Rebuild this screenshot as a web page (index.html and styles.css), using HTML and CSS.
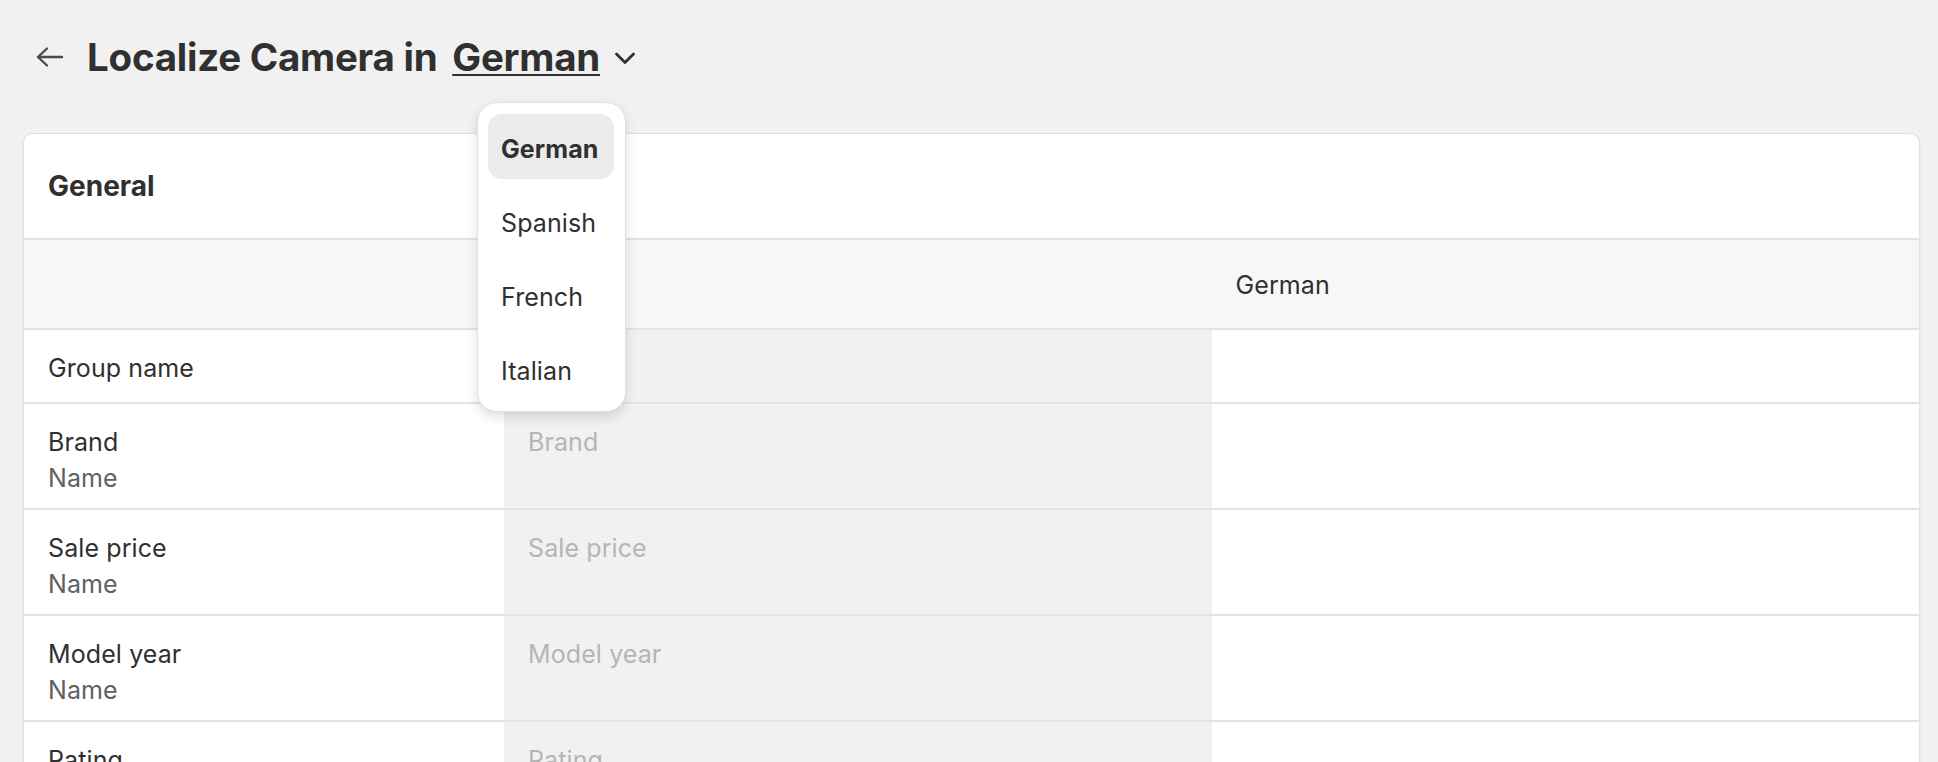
FILE: index.html
```html
<!DOCTYPE html>
<html lang="en">
<head>
    <meta charset="UTF-8">
    <meta name="viewport" content="width=device-width, initial-scale=1.0">
    <title>Localize Camera</title>
    <link rel="stylesheet" href="styles.css">
</head>
<body>

    <div class="page">
        <header class="page-header">
            <button class="back" aria-label="Back">
                <svg width="28" height="20" viewBox="0 0 28 20"><path d="M2 10H26M11 1.5L2 10L11 18.5" fill="none" stroke="#4a4a4a" stroke-width="2.4" stroke-linecap="round" stroke-linejoin="round"/></svg>
            </button>
            <h1 class="title">Localize Camera in <span class="lang">German</span></h1>
            <svg class="chevron" width="22" height="14" viewBox="0 0 22 14"><path d="M2.5 3L11 11.5L19.5 3" fill="none" stroke="#303030" stroke-width="2.8" stroke-linecap="round" stroke-linejoin="round"/></svg>
        </header>

        <!-- language menu, open -->
        <ul class="menu">
            <li class="menu-item selected">German</li>
            <li class="menu-item">Spanish</li>
            <li class="menu-item">French</li>
            <li class="menu-item">Italian</li>
        </ul>

        <div class="card">
            <div class="card-title">General</div>

            <div class="row head">
                <div class="cell"></div>
                <div class="cell"></div>
                <div class="cell">German</div>
            </div>

            <div class="row">
                <div class="cell label">Group name</div>
                <div class="cell source"></div>
                <div class="cell"></div>
            </div>
            <div class="row">
                <div class="cell label">Brand<span class="sub">Name</span></div>
                <div class="cell source">Brand</div>
                <div class="cell"></div>
            </div>
            <div class="row">
                <div class="cell label">Sale price<span class="sub">Name</span></div>
                <div class="cell source">Sale price</div>
                <div class="cell"></div>
            </div>
            <div class="row">
                <div class="cell label">Model year<span class="sub">Name</span></div>
                <div class="cell source">Model year</div>
                <div class="cell"></div>
            </div>
            <div class="row">
                <div class="cell label">Rating<span class="sub">Name</span></div>
                <div class="cell source">Rating</div>
                <div class="cell"></div>
            </div>
        </div>
    </div>

</body>
</html>
```

FILE: styles.css
```css
body { margin: 0; background-color: #f1f1f1; font-family: Inter, "Noto Sans", sans-serif; color: #303030; font-size: 25px; line-height: 36px; letter-spacing: 0.1px; }
.page { position: relative; padding: 34px 18px 0 23px; }

.page-header { display: flex; align-items: center; height: 46px; margin-bottom: 53px; }
.back { border: 0; background: none; padding: 0; margin: 0 23px 0 13px; display: flex; }
.title { margin: 0; font-size: 38.5px; line-height: 46px; font-weight: 700; letter-spacing: -0.25px; }
.lang { margin-left: 6px; text-decoration: underline; text-decoration-thickness: 2px; text-underline-offset: 3px; }
.chevron { margin-left: 14px; margin-top: 2px; }

.menu { position: absolute; left: 477px; top: 102px; z-index: 2; list-style: none; margin: 0; padding: 11px 11px 10px 10px; width: 126px; display: flex; flex-direction: column; gap: 9px; background: #fff; border: 1px solid #e0e0e0; border-radius: 20px; box-shadow: 0 5px 12px rgba(0, 0, 0, 0.13); }
.menu-item { box-sizing: border-box; height: 65px; padding: 5px 0 0 13px; display: flex; align-items: center; border-radius: 14px; }
.menu-item.selected { background-color: #ebebeb; font-weight: 700; }

.card { background: #fff; border: 1px solid #e0e0e0; border-radius: 10px; box-shadow: 0 1px 3px rgba(0, 0, 0, 0.08); overflow: hidden; }
.card-title { padding: 34px 24px 34px; font-size: 28px; font-weight: 700; letter-spacing: 0; }

.row { display: grid; grid-template-columns: 480px 1fr 1fr; border-top: 2px solid #e3e3e3; }
.cell { padding: 20px 24px 12px; min-height: 36px; }
.row.head { background-color: #f7f7f7; }
.row.head .cell { padding: 27px 24px 25px; }
.row:nth-child(3) .cell { padding-bottom: 16px; }
.label .sub { display: block; color: #616161; }
.source { background-color: #f1f1f1; color: #b5b5b5; }
```
